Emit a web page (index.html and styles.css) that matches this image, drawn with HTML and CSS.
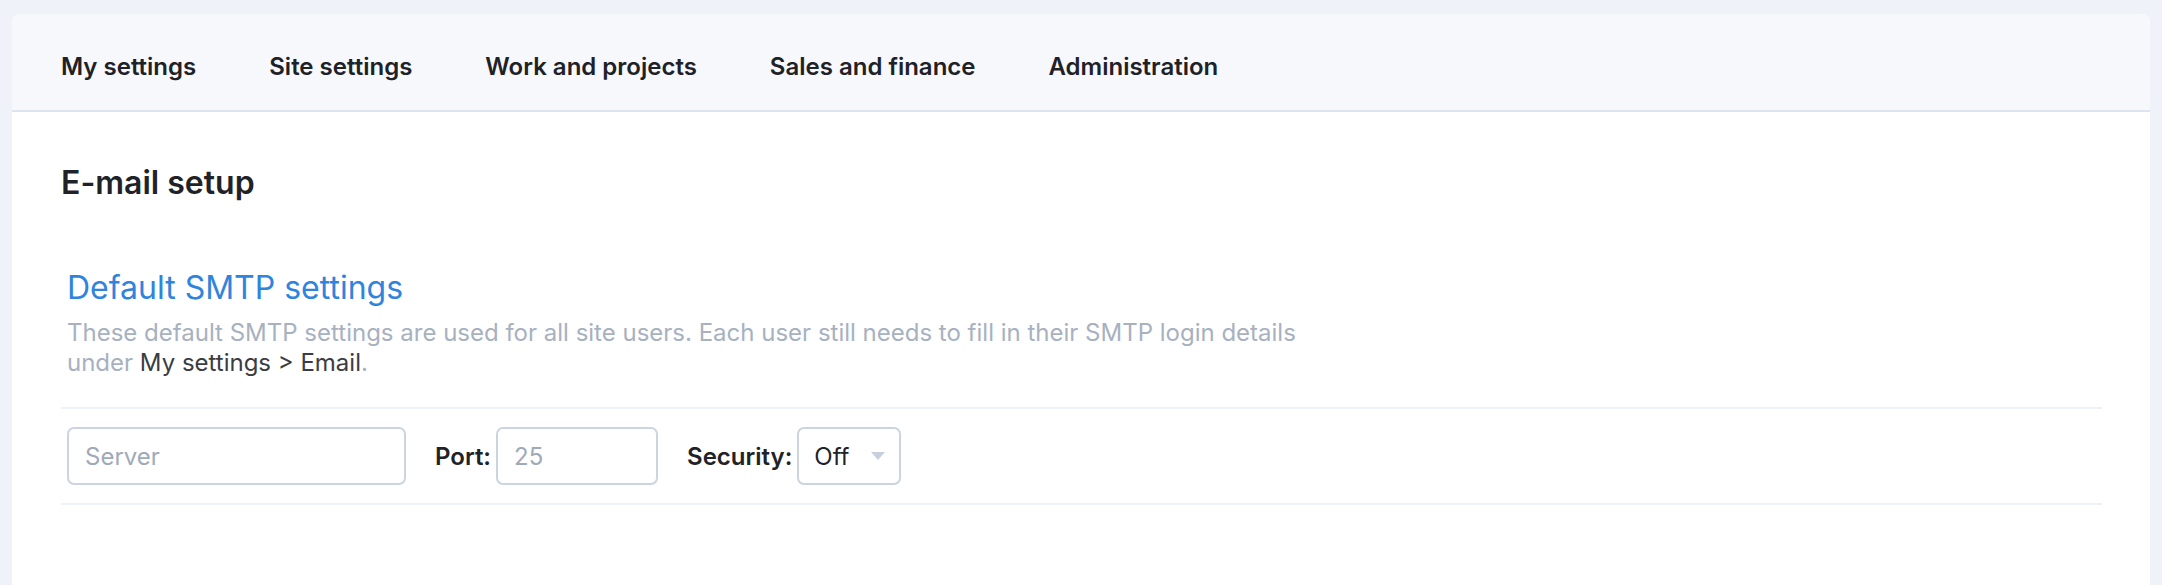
FILE: index.html
```html
<!DOCTYPE html>
<html lang="en">
<head>
<meta charset="utf-8">
<title>E-mail setup</title>
<link rel="stylesheet" href="styles.css">
</head>
<body>
<div class="card">
  <nav class="tabs">
    <a class="tab">My settings</a>
    <a class="tab">Site settings</a>
    <a class="tab">Work and projects</a>
    <a class="tab">Sales and finance</a>
    <a class="tab">Administration</a>
  </nav>
  <main class="content">
    <h1 class="page-title">E-mail setup</h1>
    <section class="section">
      <h2 class="section-title">Default SMTP settings</h2>
      <p class="section-desc">These default SMTP settings are used for all site users. Each user still needs to fill in their SMTP login details<br>under <span class="path">My settings &gt; Email</span>.</p>
    </section>
    <div class="form-row">
      <input class="field field-server" type="text" placeholder="Server">
      <label class="label label-port">Port:</label>
      <input class="field field-port" type="text" placeholder="25">
      <label class="label label-sec">Security:</label>
      <div class="select">
        <span class="select-value">Off</span>
        <span class="select-arrow"></span>
      </div>
    </div>
  </main>
</div>
</body>
</html>
```
FILE: styles.css
```css
* { box-sizing: border-box; }
html, body {
  margin: 0;
  padding: 0;
  background: #eff2f9;
  font-family: Inter, "Noto Sans", "Liberation Sans", sans-serif;
  height: 100%;
  overflow: hidden;
}
.card {
  margin: 14px 12px 0 12px;
  background: #ffffff;
  border-radius: 8px 8px 0 0;
  min-height: 600px;
}
.tabs {
  display: flex;
  align-items: center;
  gap: 73px;
  height: 98px;
  padding: 8px 49px 0;
  background: #f7f8fc;
  border-bottom: 2px solid #dee4ee;
  border-radius: 8px 8px 0 0;
}
.tab {
  font-size: 24px;
  font-weight: 600;
  color: #1e2227;
}
.content {
  padding: 0 48px 0 49px;
}
.page-title {
  margin: 0;
  padding-top: 51px;
  font-size: 32px;
  line-height: 40px;
  font-weight: 600;
  color: #1f2328;
}
.section {
  padding: 65px 0 0 6px;
}
.section-title {
  margin: 0;
  font-size: 32px;
  line-height: 40px;
  font-weight: 400;
  color: #2f84dc;
}
.section-desc {
  margin: 10px 0 0;
  font-size: 24px;
  line-height: 30px;
  color: #a7b1c0;
}
.path { color: #3a3d43; }
.form-row {
  display: flex;
  align-items: center;
  margin-top: 29px;
  padding: 18px 0 18px 6px;
  border-top: 2px solid #eef1f6;
  border-bottom: 2px solid #eef1f6;
}
.field {
  height: 58px;
  border: 2px solid #ccd4e2;
  border-radius: 7px;
  padding: 0 16px;
  font-family: inherit;
  font-size: 24px;
  color: #1f2328;
  background: #fff;
  outline: none;
}
.field::placeholder { color: #9fa9b9; }
.field-server { width: 339px; }
.field-port { width: 162px; }
.label {
  font-size: 24px;
  font-weight: 600;
  color: #1f2328;
}
.label-port { margin: 0 5px 0 29px; }
.label-sec { margin: 0 5px 0 29px; }
.select {
  display: flex;
  align-items: center;
  justify-content: space-between;
  width: 104px;
  height: 58px;
  border: 2px solid #ccd4e2;
  border-radius: 7px;
  padding: 0 14px 0 15px;
  background: #fff;
}
.select-value {
  font-size: 24px;
  color: #1f2328;
}
.select-arrow {
  width: 0;
  height: 0;
  border-left: 7px solid transparent;
  border-right: 7px solid transparent;
  border-top: 8px solid #c8d0de;
}
```
